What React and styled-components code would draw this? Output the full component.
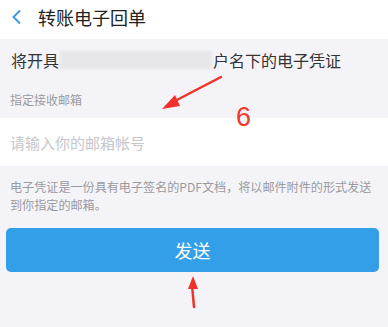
import React from 'react';
import styled, { createGlobalStyle } from 'styled-components';

const Global = createGlobalStyle`
body {
  margin: 0;
  background: #f4f4f8;
  font-family: "Noto Sans CJK SC", "Noto Sans", sans-serif;
}
`

const Page = styled.main`
position: relative;
width: 388px;
height: 327px;
overflow: hidden;
background: #f4f4f8;
display: flex;
flex-direction: column;
`

const Header = styled.header`
height: 39px;
background: #fff;
display: flex;
align-items: center;
padding-left: 11px;
gap: 16px;

h1 {
  margin: 0;
  font-size: 18px;
  font-weight: 400;
  color: #222;
  line-height: 24px;
  margin-top: -6px;
}
`

const Back = styled.svg`
width: 11px;
height: 16px;
margin-top: -6px;
`

const InfoRow = styled.div`
height: 42px;
display: flex;
align-items: center;
padding-left: 11px;
font-size: 16px;
color: #333;
`

const Masked = styled.span`
display: inline-block;
width: 152px;
height: 18px;
margin: 0 1px;
background: #e6e6e9;
border-radius: 2px;
filter: blur(1.5px);
`

const Label = styled.div`
height: 37px;
display: flex;
align-items: flex-end;
padding: 0 0 10px 10px;
box-sizing: border-box;
font-size: 12px;
line-height: 16px;
color: #9a9a9e;
`

const Input = styled.input`
height: 48px;
border: none;
outline: none;
background: #fff;
padding: 0 10px;
font-family: inherit;
font-size: 15px;
color: #333;

&::placeholder {
  color: #c6c6ca;
}
`

const Note = styled.p`
margin: 0;
padding: 12px 12px 0 10px;
font-size: 12.1px;
line-height: 18px;
color: #9a9a9e;
`

const SendButton = styled.button`
margin: 14px 0 0 6px;
width: 373px;
height: 44px;
border: none;
border-radius: 5px;
background: #349fe9;
color: #fff;
font-family: inherit;
font-size: 18px;
`

const Annotation = styled.svg`
position: absolute;
left: 0;
top: 0;
width: 388px;
height: 327px;
pointer-events: none;
`

const Step = styled.span`
position: absolute;
left: 236px;
top: 99px;
font-family: "Liberation Sans", sans-serif;
font-size: 27px;
line-height: 36px;
color: #f03a2e;
`

export default function App() {
  return (
    <>
      <Global />
      <Page>
        <Header>
          <Back viewBox="0 0 11 16">
            <path d="M9 1.5 L2.5 8 L9 14.5" fill="none" stroke="#3a9be6" strokeWidth="2" />
          </Back>
          <h1>转账电子回单</h1>
        </Header>
        <InfoRow>
          将开具<Masked />户名下的电子凭证
        </InfoRow>
        <Label>指定接收邮箱</Label>
        <Input placeholder="请输入你的邮箱帐号" />
        <Note>电子凭证是一份具有电子签名的PDF文档，将以邮件附件的形式发送到你指定的邮箱。</Note>
        <SendButton>发送</SendButton>
        <Annotation viewBox="0 0 388 327">
          <path d="M221 77 L173 102" stroke="#f0302a" strokeWidth="2.5" strokeLinecap="round" />
          <path d="M162 109 L175 95 L180 106 Z" fill="#f0302a" />
          <path d="M194 307 L192 285" stroke="#f0302a" strokeWidth="2.5" strokeLinecap="round" />
          <path d="M193 276 L188 289 L198 289 Z" fill="#f0302a" />
        </Annotation>
        <Step>6</Step>
      </Page>
    </>
  );
}
